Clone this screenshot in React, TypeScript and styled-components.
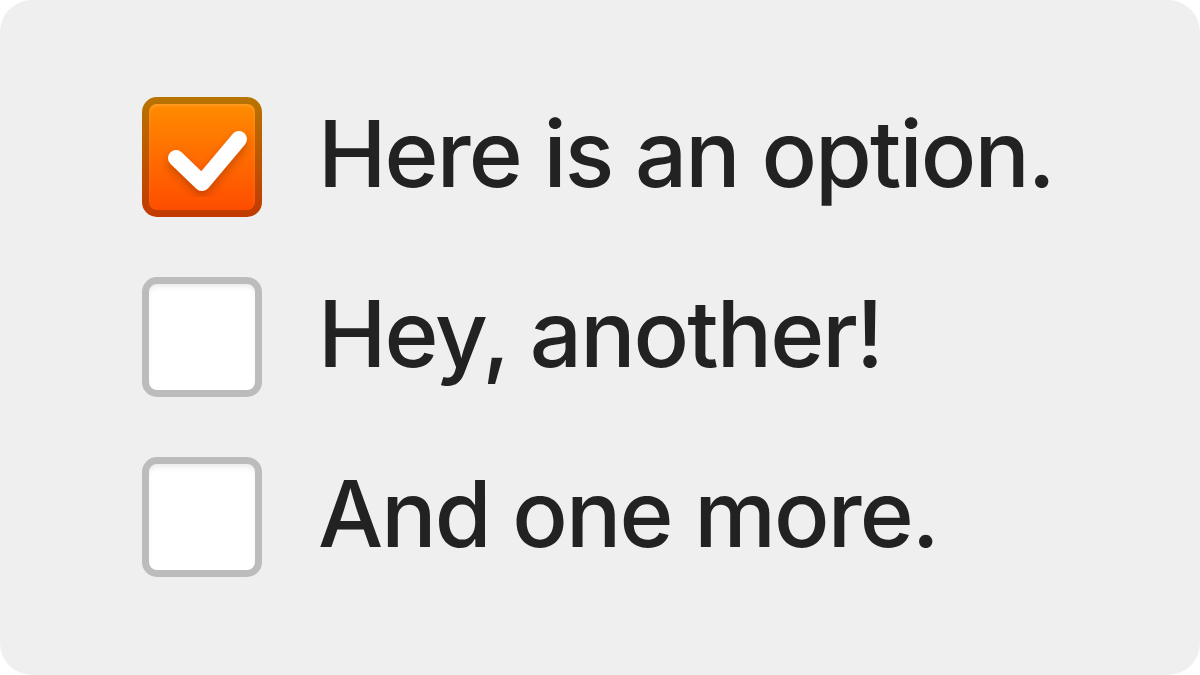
import React, { FC } from "react";
import styled, { createGlobalStyle } from "styled-components";

const Global = createGlobalStyle`
  html, body {
    margin: 0;
    padding: 0;
    background: #fff;
  }
  body {
    font-family: Inter, "Noto Sans", sans-serif;
  }
`;

const Panel = styled.div`
  width: 1200px;
  height: 675px;
  box-sizing: border-box;
  background: #efefef;
  border-radius: 32px;
  padding: 97px 0 0 142px;
  display: flex;
  flex-direction: column;
  gap: 60px;
`;

const Row = styled.label`
  display: flex;
  align-items: center;
  gap: 56px;
  height: 120px;
`;

const Box = styled.div<{ checked?: boolean }>`
  width: 120px;
  height: 120px;
  box-sizing: border-box;
  border-radius: 15px;
  border: 7px solid ${(p) => (p.checked ? "transparent" : "#bcbcbc")};
  background: ${(p) =>
    p.checked
      ? "linear-gradient(#ff8c00, #ff4d00) padding-box, linear-gradient(#b87400, #c23a00) border-box"
      : "#fff"};
  box-shadow: ${(p) =>
    p.checked
      ? "inset 0 2px 3px rgba(255,255,255,0.15)"
      : "inset 0 5px 6px -3px rgba(0,0,0,0.1)"};
  display: flex;
  align-items: center;
  justify-content: center;
  flex-shrink: 0;
`;

const Label = styled.span`
  font-family: Inter, "Noto Sans", sans-serif;
  font-size: 92px;
  font-weight: 500;
  color: #222;
  letter-spacing: -1.9px;
  line-height: 1;
  margin-top: -6px;
`;

const Check: FC = () => (
  <svg width="106" height="106" viewBox="0 0 106 106">
    <defs>
      <filter id="sh" x="-30%" y="-30%" width="160%" height="160%">
        <feDropShadow dx="0" dy="5" stdDeviation="4" floodColor="#8a2a00" floodOpacity="0.45" />
      </filter>
    </defs>
    <path
      d="M27 54 L53 79 L90 35"
      fill="none"
      stroke="#fff"
      strokeWidth="16"
      strokeLinecap="round"
      strokeLinejoin="round"
      filter="url(#sh)"
    />
  </svg>
);

const Option: FC<{ checked?: boolean; text: string }> = ({ checked, text }) => (
  <Row>
    <Box checked={checked}>{checked && <Check />}</Box>
    <Label>{text}</Label>
  </Row>
);

export default function App() {
  return (
    <>
      <Global />
      <Panel>
        <Option checked text="Here is an option." />
        <Option text="Hey, another!" />
        <Option text="And one more." />
      </Panel>
    </>
  );
}
